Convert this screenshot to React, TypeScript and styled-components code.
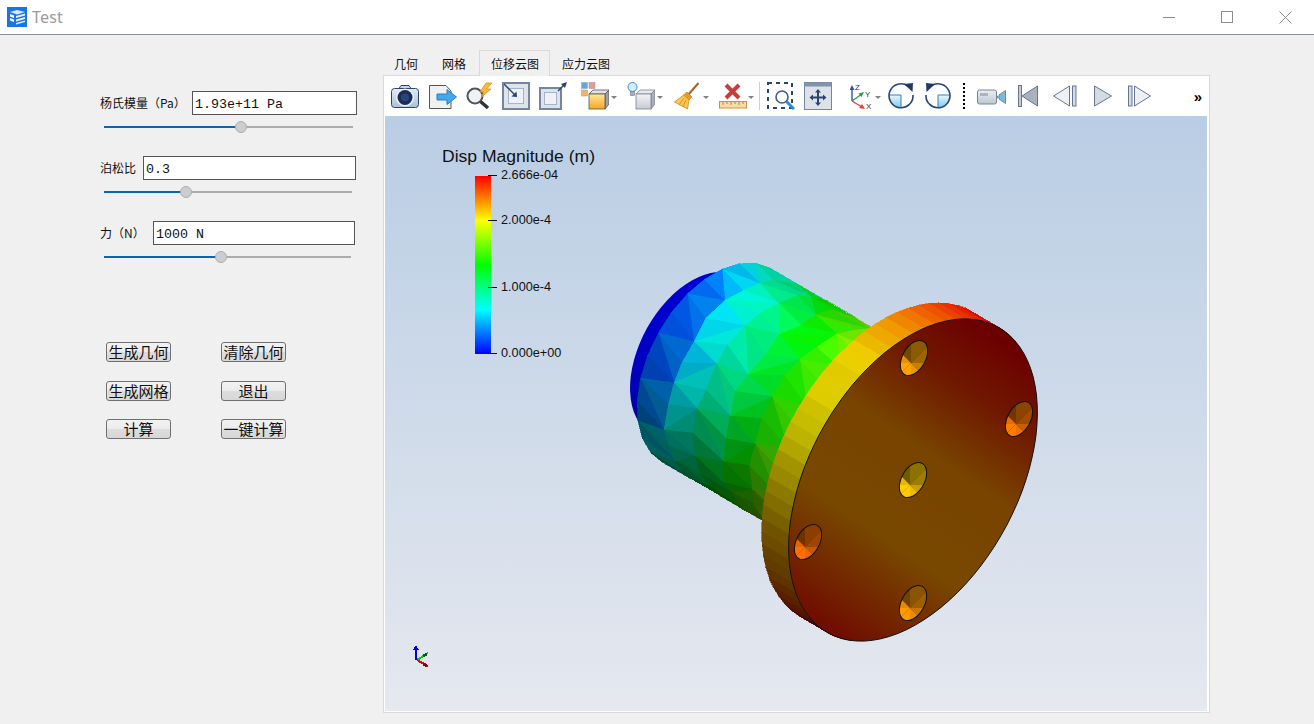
import React from "react";
import styled, { createGlobalStyle } from "styled-components";

const GlobalStyle = createGlobalStyle`
  html, body {
    margin: 0;
    padding: 0;
    background: #f0f0f0;
  }
  #root {
    width: 1314px;
    height: 724px;
    overflow: hidden;
  }
`;

const CJK = `"Noto Sans CJK SC", "Noto Sans", sans-serif`;

// Window chrome
const Window = styled.div`
  display: flex;
  flex-direction: column;
  width: 1314px;
  height: 724px;
  background: #f0f0f0;
  font-family: ${CJK};
`;

const TitleBar = styled.header`
  display: flex;
  align-items: center;
  height: 34px;
  padding-left: 7px;
  background: #fff;
  border-bottom: 1px solid #8a9096;
`;

const TitleText = styled.span`
  margin-left: 5px;
  font-family: "Noto Sans", sans-serif;
  font-size: 16px;
  letter-spacing: 0.2px;
  color: #9a9a9a;
`;

const WindowButtons = styled.div`
  display: flex;
  margin-left: auto;
`;

const WindowButton = styled.div`
  display: flex;
  align-items: center;
  justify-content: center;
  width: 58px;
  height: 30px;
`;

const Body = styled.main`
  display: flex;
  flex: 1;
  min-height: 0;
`;

// Left form column
const FormColumn = styled.section`
  display: flex;
  flex-direction: column;
  width: 383px;
  box-sizing: border-box;
  padding: 56px 0 0 100px;
`;

const Fields = styled.div`
  display: flex;
  flex-direction: column;
  gap: 22px;
`;

const Field = styled.div<{ $width: number }>`
  display: flex;
  flex-direction: column;
  width: ${(p) => p.$width}px;
`;

const FieldRow = styled.div`
  display: flex;
  align-items: center;
  height: 24px;
`;

const FieldLabel = styled.label<{ $width: number }>`
  flex: none;
  width: ${(p) => p.$width}px;
  margin-top: -2px;
  font-size: 12px;
  color: #111;
  white-space: nowrap;
`;

const FieldInput = styled.input`
  flex: 1;
  min-width: 0;
  height: 24px;
  box-sizing: border-box;
  margin: 0;
  padding: 2px 3px 0 2px;
  border: 1px solid #555;
  border-radius: 0;
  outline: none;
  background: #fff;
  font-family: "Liberation Mono", monospace;
  font-size: 13.33px;
  color: #111;
`;

const SliderTrack = styled.div<{ $width: number }>`
  position: relative;
  display: flex;
  align-items: center;
  width: ${(p) => p.$width}px;
  height: 14px;
  margin: 5px 0 0 4px;
`;

const SliderFill = styled.div`
  height: 2px;
  background: #0b63b5;
`;

const SliderRest = styled.div`
  flex: 1;
  height: 2px;
  background: #acacac;
`;

const SliderThumb = styled.div`
  position: absolute;
  top: 1px;
  width: 12px;
  height: 12px;
  margin-left: -6px;
  border-radius: 50%;
  box-sizing: border-box;
  border: 1px solid #adadad;
  background: #cdcdcd;
`;

const ButtonGrid = styled.div`
  display: grid;
  grid-template-columns: 65px 65px;
  grid-template-rows: 39px 38px 20px;
  column-gap: 50px;
  margin: 78px 0 0 6px;
`;

const PushButton = styled.button`
  width: 65px;
  height: 20px;
  box-sizing: border-box;
  margin: 0;
  padding: 0 0 2px;
  border: 1px solid #707070;
  border-radius: 3px;
  background: linear-gradient(#f2f2f2 0%, #ebebeb 50%, #dcdcdc 51%, #d8d8d8 100%);
  font-family: ${CJK};
  font-size: 15px;
  line-height: 17px;
  color: #111;
  white-space: nowrap;
  overflow: hidden;
`;

// Right tabbed view
const ViewColumn = styled.section`
  display: flex;
  flex-direction: column;
  width: 827px;
  height: 678px;
  box-sizing: border-box;
  padding-top: 15px;
`;

const TabBar = styled.nav`
  display: flex;
  align-items: flex-end;
  flex: none;
  height: 25px;
  font-size: 12px;
  color: #111;
`;

const Tab = styled.div<{ $active?: boolean }>`
  display: flex;
  align-items: center;
  box-sizing: border-box;
  height: ${(p) => (p.$active ? "26px" : "24px")};
  margin: ${(p) => (p.$active ? "0 1px -1px 0" : "0 2px 0 0")};
  padding: ${(p) => (p.$active ? "0 10px 0 11px" : "0 11px")};
  border: ${(p) => (p.$active ? "1px solid #d9d9d9" : "0")};
  border-bottom: 0;
  background: #f0f0f0;
  z-index: 1;
`;

const TabPanel = styled.div`
  display: flex;
  flex-direction: column;
  flex: 1;
  min-height: 0;
  box-sizing: border-box;
  padding: 0 2px 1px 1px;
  border: 1px solid #d9d9d9;
  background: #fff;
`;

const Toolbar = styled.div`
  display: flex;
  align-items: center;
  flex: none;
  height: 40px;
  padding: 0 5px 0 6px;
  background: #fff;
`;

const Tool = styled.div<{ $gap: number }>`
  display: flex;
  align-items: center;
  flex: none;
  height: 28px;
  margin-left: ${(p) => p.$gap}px;
`;

const MenuArrow = styled.span<{ $gap: number }>`
  width: 0;
  height: 0;
  margin: 2px 0 0 ${(p) => p.$gap}px;
  border-left: 3px solid transparent;
  border-right: 3px solid transparent;
  border-top: 3px solid #808080;
`;

const Separator = styled.div`
  width: 1px;
  height: 28px;
  background: #cfcfcf;
`;

const DottedHandle = styled.div`
  width: 0;
  height: 26px;
  border-left: 2px dotted #000;
  margin: 0 1px 0 0;
`;

const Overflow = styled.span`
  margin-left: auto;
  font-family: "Liberation Sans", sans-serif;
  font-size: 15px;
  font-weight: 700;
  color: #000;
`;

const Viewport = styled.div`
  flex: 1;
  min-height: 0;
  background: linear-gradient(#b9cde4, #e5e8ef);
`;

const Scene = styled.svg`
  display: block;
  width: 100%;
  height: 100%;
`;

// helpers for the rendered model
const rng = (seed: number) => () => {
  seed = (seed * 16807) % 2147483647;
  return seed / 2147483647;
};

const jet = (v: number): number[] => {
  const t = Math.max(0, Math.min(1, v)) * 4;
  if (t < 1) return [0, t, 1];
  if (t < 2) return [0, 1, 2 - t];
  if (t < 3) return [t - 2, 1, 0];
  return [1, 4 - t, 0];
};

const color = (v: number, shade: number) => {
  const [r, g, b] = jet(v);
  const s = Math.max(0, Math.min(1, shade)) * 255;
  return `rgb(${Math.round(r * s)},${Math.round(g * s)},${Math.round(b * s)})`;
};

const lerpTable = (table: number[][], x: number) => {
  if (x <= table[0][0]) return table[0][1];
  for (let i = 1; i < table.length; i++) {
    if (x <= table[i][0]) {
      const [x0, y0] = table[i - 1];
      const [x1, y1] = table[i];
      return y0 + ((x - x0) / (x1 - x0)) * (y1 - y0);
    }
  }
  return table[table.length - 1][1];
};

const rad = (61 * Math.PI) / 180;
const M = [Math.cos(rad), -Math.sin(rad)];
const N = [Math.sin(rad), Math.cos(rad)];

type Pt = number[];
const ringPoint = (c: Pt, a: number, b: number, deg: number): Pt => {
  const r = (deg * Math.PI) / 180;
  return [
    c[0] + a * Math.cos(r) * M[0] - b * Math.sin(r) * N[0],
    c[1] + a * Math.cos(r) * M[1] - b * Math.sin(r) * N[1],
  ];
};
const pts = (list: Pt[]) => list.map((p) => `${p[0].toFixed(1)},${p[1].toFixed(1)}`).join(" ");

const bodyShade = [[0, 0.78], [45, 0.98], [75, 0.9], [104, 0.72], [133, 0.48], [142, 0.4], [180, 0.3]];
const bodyValue = [[720, 0.02], [744, 0.07], [767, 0.14], [790, 0.25], [830, 0.36], [870, 0.5], [912, 0.62], [940, 0.68]];
const rimShade = [[0, 0.85], [35, 0.95], [62, 0.92], [80, 0.86], [95, 0.74], [115, 0.56], [134, 0.42], [180, 0.3]];
const rimValue = [[0, 1], [35, 0.88], [62, 0.78], [95, 0.76], [120, 0.79], [150, 0.86], [180, 1]];

const buildBody = () => {
  const rand = rng(4711);
  const back = [716, 365];
  const front = [886, 464];
  const nu = 6;
  const nv = 14;
  const grid: { p: Pt; deg: number }[][] = [];
  for (let i = 0; i <= nu; i++) {
    const row = [];
    for (let j = 0; j <= nv; j++) {
      const u = i / nu;
      const deg = (j / nv) * 180;
      const c = [back[0] + (front[0] - back[0]) * u, back[1] + (front[1] - back[1]) * u];
      const p = ringPoint(c, 111, 66, deg + (i % 2 ? 180 / nv / 2 : 0) * (j < nv && j > 0 ? 1 : 0));
      if (i > 0 && i < nu && j > 0 && j < nv) {
        p[0] += (rand() - 0.5) * 6;
        p[1] += (rand() - 0.5) * 6;
      }
      row.push({ p, deg });
    }
    grid.push(row);
  }
  const tris: { points: string; fill: string }[] = [];
  const add = (a: { p: Pt; deg: number }, b: { p: Pt; deg: number }, c: { p: Pt; deg: number }) => {
    const cx = (a.p[0] + b.p[0] + c.p[0]) / 3;
    const cy = (a.p[1] + b.p[1] + c.p[1]) / 3;
    const deg = (a.deg + b.deg + c.deg) / 3;
    const d = cx * N[0] + cy * N[1];
    const v = lerpTable(bodyValue, d) + (rand() - 0.5) * 0.01;
    const s = lerpTable(bodyShade, deg) + (rand() - 0.5) * 0.035;
    tris.push({ points: pts([a.p, b.p, c.p]), fill: color(v, s) });
  };
  for (let i = 0; i < nu; i++) {
    for (let j = 0; j < nv; j++) {
      const a = grid[i][j];
      const b = grid[i + 1][j];
      const c = grid[i + 1][j + 1];
      const d = grid[i][j + 1];
      if ((i + j) % 2) {
        add(a, b, c);
        add(a, c, d);
      } else {
        add(a, b, d);
        add(b, c, d);
      }
    }
  }
  return tris;
};

const faceCenter = [913, 480];
const rimCenter = [886, 464];

const buildRim = () => {
  const rand = rng(991);
  const quads: { points: string; fill: string }[] = [];
  for (let deg = -12; deg < 192; deg += 5) {
    const a = ringPoint(rimCenter, 175, 104, deg);
    const b = ringPoint(faceCenter, 175, 104, deg);
    const c = ringPoint(faceCenter, 175, 104, deg + 5.5);
    const d = ringPoint(rimCenter, 175, 104, deg + 5.5);
    const k = Math.max(0, Math.min(180, deg + 2.5));
    quads.push({
      points: pts([a, b, c, d]),
      fill: color(lerpTable(rimValue, k), lerpTable(rimShade, k) + (rand() - 0.5) * 0.025),
    });
  }
  return quads;
};

const holes = [
  { c: [914, 358], v: 0.84 },
  { c: [1019, 419], v: 0.88 },
  { c: [913, 480], v: 0.8 },
  { c: [808, 542], v: 0.89 },
  { c: [913, 603], v: 0.85 },
];

const bodyTris = buildBody();
const rimQuads = buildRim();
const faceOutline = pts(Array.from({ length: 90 }, (_, i) => ringPoint(faceCenter, 175, 104, i * 4)));

const Hole = ({ c, v, id }: { c: number[]; v: number; id: string }) => {
  const apex = [c[0] - 3, c[1] + 5];
  const fan = [0.44, 0.55, 0.62, 0.78, 0.92, 1, 1, 0.9];
  return (
    <g>
      <clipPath id={id}>
        <ellipse cx={c[0]} cy={c[1]} rx={19} ry={11.5} transform={`rotate(-61 ${c[0]} ${c[1]})`} />
      </clipPath>
      <g clipPath={`url(#${id})`}>
        {fan.map((s, i) => {
          const a0 = ((-135 + i * 45) * Math.PI) / 180;
          const a1 = ((-135 + (i + 1) * 45) * Math.PI) / 180;
          return (
            <polygon
              key={i}
              points={pts([apex, [apex[0] + 40 * Math.cos(a0), apex[1] + 40 * Math.sin(a0)], [apex[0] + 40 * Math.cos(a1), apex[1] + 40 * Math.sin(a1)]])}
              fill={color(v, s)}
            />
          );
        })}
      </g>
      <ellipse cx={c[0]} cy={c[1]} rx={19} ry={11.5} transform={`rotate(-61 ${c[0]} ${c[1]})`} fill="none" stroke="#111" strokeWidth={1} />
    </g>
  );
};

const ColorBar = () => (
  <g fontFamily="'Liberation Sans', sans-serif" fill="#111">
    <text x={442} y={162} fontSize={16} textLength={153} lengthAdjust="spacingAndGlyphs">
      Disp Magnitude (m)
    </text>
    <rect x={475} y={176} width={16} height={178} fill="url(#jetBar)" />
    {[175.5, 220.5, 287.5, 353.5].map((y) => (
      <line key={y} x1={488} x2={497} y1={y} y2={y} stroke="#111" strokeWidth={1} />
    ))}
    <text x={501} y={179} fontSize={12.7}>2.666e-04</text>
    <text x={501} y={224} fontSize={12.7}>2.000e-4</text>
    <text x={501} y={291} fontSize={12.7}>1.000e-4</text>
    <text x={501} y={357} fontSize={12.7}>0.000e+00</text>
  </g>
);

const Triad = () => (
  <g shapeRendering="crispEdges">
    <line x1={416} y1={660} x2={416} y2={648} stroke="#0000e0" strokeWidth={2} />
    <polygon points="413,650 419,650 416,645" fill="#0000e0" />
    <line x1={417} y1={660} x2={428} y2={653} stroke="#00d000" strokeWidth={2} />
    <line x1={423} y1={656} x2={427} y2={654} stroke="#006000" strokeWidth={3} />
    <line x1={417} y1={660} x2={428} y2={666} stroke="#e00000" strokeWidth={2} />
    <line x1={423} y1={664} x2={427} y2={666} stroke="#900000" strokeWidth={3} />
  </g>
);

const Model = () => (
  <Scene viewBox="385 116 822 595" aria-hidden>
    <defs>
      <linearGradient id="jetBar" x1="0" y1="0" x2="0" y2="1">
        <stop offset="0" stopColor="#ff0000" />
        <stop offset="0.25" stopColor="#ffff00" />
        <stop offset="0.5" stopColor="#00ff00" />
        <stop offset="0.75" stopColor="#00ffff" />
        <stop offset="1" stopColor="#0000ff" />
      </linearGradient>
      <linearGradient id="capShade" gradientUnits="userSpaceOnUse" x1="720" y1="280" x2="630" y2="420">
        <stop offset="0" stopColor="#0000d8" />
        <stop offset="0.55" stopColor="#0000b0" />
        <stop offset="1" stopColor="#00006c" />
      </linearGradient>
      <linearGradient id="faceShade" gradientUnits="userSpaceOnUse" x1="1010" y1="345" x2="820" y2="625">
        <stop offset="0" stopColor="#6c0000" />
        <stop offset="0.18" stopColor="#701800" />
        <stop offset="0.4" stopColor="#784400" />
        <stop offset="0.68" stopColor="#784800" />
        <stop offset="0.85" stopColor="#742800" />
        <stop offset="1" stopColor="#700c00" />
      </linearGradient>
    </defs>
    <ColorBar />
    <ellipse cx={695} cy={355} rx={90} ry={55} transform="rotate(-61 695 355)" fill="url(#capShade)" />
    <g shapeRendering="crispEdges">
      {bodyTris.map((t, i) => (
        <polygon key={i} points={t.points} fill={t.fill} stroke={t.fill} strokeWidth={0.6} />
      ))}
      {rimQuads.map((q, i) => (
        <polygon key={i} points={q.points} fill={q.fill} stroke={q.fill} strokeWidth={0.6} />
      ))}
    </g>
    <polygon points={faceOutline} fill="url(#faceShade)" stroke="#111" strokeWidth={1} />
    {holes.map((h, i) => (
      <Hole key={i} id={`hole${i}`} c={h.c} v={h.v} />
    ))}
    <Triad />
  </Scene>
);

// Toolbar icons, drawn on a 28 high box
const Icon = ({ w = 28, children }: { w?: number; children: React.ReactNode }) => (
  <svg width={w} height={28} viewBox={`0 0 ${w} 28`} aria-hidden>
    {children}
  </svg>
);

const navy = "#2a4474";
const slate = "#74869f";

const CameraIcon = () => (
  <Icon>
    <defs>
      <linearGradient id="camBody" x1="0" y1="0" x2="0" y2="1">
        <stop offset="0" stopColor="#e2ebf5" />
        <stop offset="1" stopColor="#a8c0dc" />
      </linearGradient>
    </defs>
    <path d="M8 6.5 L10 3.5 H18 L20 6.5" fill="#c5d5e8" stroke={navy} />
    <rect x={0.5} y={6.5} width={27} height={19} rx={3} fill="url(#camBody)" stroke={navy} />
    <circle cx={14} cy={15.5} r={9} fill="#eef4fa" />
    <circle cx={14} cy={15.5} r={7.5} fill="#1c2c56" />
    <circle cx={14} cy={15.5} r={4} fill="#27457c" />
  </Icon>
);

const ExportIcon = () => (
  <Icon>
    <path d="M0.5 3.5 H17 L22 9 V26.5 H0.5 Z" fill="#f1f1f1" stroke="#555" />
    <path d="M8 12 H18 V7.5 L27.5 15 L18 22.5 V18 H8 Z" fill="#45a8ea" stroke="#2b7fc0" />
  </Icon>
);

const LightningLensIcon = () => (
  <Icon>
    <circle cx={10} cy={14} r={7.5} fill="#eef2f6" stroke="#555" strokeWidth={2} />
    <line x1={15.5} y1={19.5} x2={23} y2={26} stroke="#333" strokeWidth={3.5} />
    <path d="M21 1 L15 10 H19 L16.5 15 L26 7 H21.5 L27 1 Z" fill="#f7bb3a" stroke="#e08c1d" strokeWidth={0.8} />
  </Icon>
);

const FitIcon = () => (
  <Icon>
    <rect x={1} y={1} width={26} height={26} fill="#dde3ea" stroke={slate} strokeWidth={2} />
    <rect x={6.5} y={6.5} width={15} height={15} fill="#eef1f5" stroke="#a6b3c4" />
    <line x1={2} y1={2} x2={13} y2={13} stroke={navy} strokeWidth={1.4} />
    <path d="M15 15 L14.5 9.5 L9.5 14.5 Z" fill={navy} />
  </Icon>
);

const OutwardIcon = () => (
  <Icon>
    <rect x={1} y={6} width={21} height={21} fill="#dde3ea" stroke={slate} strokeWidth={2} />
    <rect x={5.5} y={10.5} width={12} height={12} fill="#eef1f5" stroke="#a6b3c4" />
    <line x1={19} y1={9} x2={25} y2={3} stroke={navy} strokeWidth={1.4} />
    <path d="M28 0 L22 2 L26 6 Z" fill={navy} />
  </Icon>
);

const CubesIcon = () => (
  <Icon>
    <rect x={0.5} y={0.5} width={6} height={6} fill="#5aa9e2" stroke="#8aa" strokeWidth={0.5} />
    <rect x={8} y={0.5} width={6} height={6} fill="#e59a9a" stroke="#a88" strokeWidth={0.5} />
    <rect x={0.5} y={8} width={6} height={6} fill="#f0b468" stroke="#a98" strokeWidth={0.5} />
    <path d="M8 12 L12 8 H28 L24 12 Z" fill="#dfe3e8" stroke="#555" strokeWidth={0.8} />
    <path d="M24 12 L28 8 V22 L24 27 Z" fill="#9aa2ad" stroke="#555" strokeWidth={0.8} />
    <defs>
      <linearGradient id="cubeOrange" x1="0" y1="0" x2="0" y2="1">
        <stop offset="0" stopColor="#ffe79a" />
        <stop offset="1" stopColor="#f6a623" />
      </linearGradient>
    </defs>
    <rect x={8} y={12} width={16} height={15} fill="url(#cubeOrange)" stroke="#555" strokeWidth={0.8} />
  </Icon>
);

const BulbCubeIcon = () => (
  <Icon>
    <path d="M9 12 L13 8 H28 L24 12 Z" fill="#e6e9ed" stroke="#7a828c" strokeWidth={0.8} />
    <path d="M24 12 L28 8 V22 L24 27 Z" fill="#a9b0b9" stroke="#7a828c" strokeWidth={0.8} />
    <defs>
      <linearGradient id="cubeGrey" x1="0" y1="0" x2="0" y2="1">
        <stop offset="0" stopColor="#f2f3f5" />
        <stop offset="1" stopColor="#c6cbd1" />
      </linearGradient>
    </defs>
    <rect x={9} y={12} width={15} height={15} fill="url(#cubeGrey)" stroke="#7a828c" strokeWidth={0.8} />
    <circle cx={5.5} cy={5} r={4.5} fill="#d5ecfb" stroke="#3f8fcf" />
    <rect x={3.5} y={9.5} width={4} height={4} fill="#9fb0c2" stroke="#667" strokeWidth={0.5} />
  </Icon>
);

const BroomIcon = () => (
  <Icon>
    <line x1={24.5} y1={1} x2={14} y2={13} stroke="#a8652a" strokeWidth={2} />
    <path d="M13 10 L18 15 L15 18 L9.5 13 Z" fill="#e89a2c" stroke="#b5701d" strokeWidth={0.6} />
    <path d="M9.5 13 L15 18 L13.5 27 L0.5 20 Z" fill="#f9c64f" stroke="#d68a1d" strokeWidth={0.8} />
    <path d="M10 16 L5 23 M12 18 L9 25" stroke="#d68a1d" strokeWidth={0.8} />
  </Icon>
);

const RulerDeleteIcon = () => (
  <Icon>
    <path d="M7 3 L20 16 M20 3 L7 16" stroke="#c63d3a" strokeWidth={4} />
    <rect x={0.5} y={19.5} width={27} height={6.5} fill="#f6dca6" stroke="#cf9140" />
    <path d="M4 20 v3 M8 20 v2 M12 20 v3 M16 20 v2 M20 20 v3 M24 20 v2" stroke="#a8702a" strokeWidth={0.8} />
  </Icon>
);

const ZoomBoxIcon = () => (
  <Icon>
    <rect x={1} y={1} width={24} height={25} fill="none" stroke={navy} strokeWidth={2} strokeDasharray="4 4" />
    <circle cx={15} cy={15} r={6} fill="#fff" stroke="#3a5f8e" strokeWidth={1.6} />
    <line x1={19.5} y1={19.5} x2={27} y2={27} stroke="#2b8fd0" strokeWidth={3} />
  </Icon>
);

const FitAllIcon = () => (
  <Icon>
    <rect x={0.5} y={0.5} width={27} height={27} fill="#dde2e9" stroke={slate} />
    <rect x={0.5} y={0.5} width={27} height={4} fill="#8293ab" />
    <path
      d="M14 7 L17 10.5 H15 V14.5 H19 V12.5 L22.5 15.5 L19 18.5 V16.5 H15 V20.5 H17 L14 24 L11 20.5 H13 V16.5 H9 V18.5 L5.5 15.5 L9 12.5 V14.5 H13 V10.5 H11 Z"
      fill={navy}
    />
  </Icon>
);

const AxesIcon = () => (
  <Icon w={24}>
    <line x1={2} y1={19} x2={2} y2={6} stroke="#2c55b0" strokeWidth={1.4} />
    <path d="M-0.5 8 L2 3 L4.5 8 Z" fill="#2c55b0" />
    <line x1={2} y1={19} x2={12} y2={12} stroke="#2f9a4e" strokeWidth={1.4} />
    <path d="M14 10 L8.5 11.5 L11.5 15 Z" fill="#2f9a4e" />
    <line x1={2} y1={19} x2={12} y2={25} stroke="#e23c3c" strokeWidth={1.4} />
    <path d="M15 27 L9 26 L12 22 Z" fill="#e23c3c" />
    <g fontFamily="'Liberation Sans', sans-serif" fontSize={8} fill="#333">
      <text x={5} y={8}>Z</text>
      <text x={15} y={15}>Y</text>
      <text x={16} y={27}>X</text>
    </g>
  </Icon>
);

const RotateIcon = ({ flip, id }: { flip?: boolean; id: string }) => (
  <Icon w={26}>
    <defs>
      <linearGradient id={id} x1="0" y1="0" x2="0" y2="1">
        <stop offset="0" stopColor="#eaf6fd" />
        <stop offset="1" stopColor="#7fcdf0" />
      </linearGradient>
    </defs>
    <g transform={flip ? "translate(26 0) scale(-1 1)" : undefined}>
      <path d="M13 13 H1.5 A11.5 11.5 0 0 0 13 25 Z" fill={`url(#${id})`} />
      <path d="M1 13 H13 V25" fill="none" stroke="#3a7fb8" strokeWidth={1} />
      <path d="M20 4 A12 12 0 1 0 25 13" fill="none" stroke={navy} strokeWidth={1.6} />
      <path d="M16 2 L25 1 L24.5 10 Z" fill="#1f3a66" />
    </g>
  </Icon>
);

const VideoIcon = () => (
  <Icon w={29}>
    <defs>
      <linearGradient id="videoBody" x1="0" y1="0" x2="0" y2="1">
        <stop offset="0" stopColor="#eceff3" />
        <stop offset="1" stopColor="#bcc5d1" />
      </linearGradient>
    </defs>
    <rect x={0.5} y={8} width={19} height={14} rx={2} fill="url(#videoBody)" stroke={slate} />
    <rect x={3} y={11} width={8} height={3} fill="#a9b3bf" />
    <path d="M19.5 13 L22 15 L19.5 17 Z" fill={slate} />
    <path d="M22 13 L28.5 8.5 V21.5 L22 17 Z" fill="#7cb9dc" stroke={slate} />
  </Icon>
);

const triangleFill = "#d5dbe5";
const triangleStroke = "#66768f";

const FirstIcon = () => (
  <Icon w={20}>
    <rect x={0.5} y={3.5} width={3} height={21} fill="#c3cad5" stroke={triangleStroke} />
    <path d="M19.5 4 V24 L4 14 Z" fill="#a9b1bd" stroke={triangleStroke} />
  </Icon>
);

const PrevIcon = () => (
  <Icon w={24}>
    <path d="M16.5 4 V24 L0.5 14 Z" fill="#edf0f4" stroke={triangleStroke} />
    <rect x={19.5} y={4} width={3.5} height={20} fill={triangleFill} stroke={triangleStroke} />
  </Icon>
);

const PlayIcon = () => (
  <Icon w={18}>
    <path d="M0.5 4 V24 L17.5 14 Z" fill={triangleFill} stroke={triangleStroke} />
  </Icon>
);

const NextIcon = () => (
  <Icon w={23}>
    <rect x={0.5} y={4} width={3.5} height={20} fill={triangleFill} stroke={triangleStroke} />
    <path d="M6.5 4 V24 L22.5 14 Z" fill="#edf0f4" stroke={triangleStroke} />
  </Icon>
);

const tools: { gap: number; node: React.ReactNode; menu?: number }[] = [
  { gap: 0, node: <CameraIcon /> },
  { gap: 10, node: <ExportIcon /> },
  { gap: 8, node: <LightningLensIcon /> },
  { gap: 9, node: <FitIcon /> },
  { gap: 9, node: <OutwardIcon /> },
  { gap: 14, node: <CubesIcon />, menu: 2 },
  { gap: 10, node: <BulbCubeIcon />, menu: 2 },
  { gap: 11, node: <BroomIcon />, menu: 1 },
  { gap: 10, node: <RulerDeleteIcon />, menu: 1 },
  { gap: 5, node: <Separator /> },
  { gap: 7, node: <ZoomBoxIcon /> },
  { gap: 9, node: <FitAllIcon /> },
  { gap: 18, node: <AxesIcon />, menu: 1 },
  { gap: 7, node: <RotateIcon id="rotA" /> },
  { gap: 11, node: <RotateIcon id="rotB" flip /> },
  { gap: 12, node: <DottedHandle /> },
  { gap: 11, node: <VideoIcon /> },
  { gap: 12, node: <FirstIcon /> },
  { gap: 15, node: <PrevIcon /> },
  { gap: 17, node: <PlayIcon /> },
  { gap: 16, node: <NextIcon /> },
];

const fields = [
  { label: "杨氏模量（Pa）", value: "1.93e+11 Pa", labelWidth: 92, width: 257, track: 249, pct: 137 },
  { label: "泊松比", value: "0.3", labelWidth: 43, width: 256, track: 248, pct: 82 },
  { label: "力（N）", value: "1000 N", labelWidth: 53, width: 255, track: 247, pct: 117 },
];

const buttons = ["生成几何", "清除几何", "生成网格", "退出", "计算", "一键计算"];

const tabs = ["几何", "网格", "位移云图", "应力云图"];

export default function App() {
  return (
    <Window>
      <GlobalStyle />
      <TitleBar>
        <svg width={20} height={20} viewBox="0 0 20 20" aria-hidden>
          <rect width={20} height={20} fill="#1a73e8" />
          <path d="M3 5 L10 3 L18 5 L10 7.5 Z" fill="#dbe9fb" />
          <path d="M3 7 L7 8.5 V11 L3 9.5 Z M3 11 L7 12.5 V15 L3 13.5 Z" fill="#fff" />
          <path d="M9 9 L18 6.5 V8.5 L9 11 Z M9 12.5 L18 10 V12 L9 14.5 Z M9 16 L18 13.5 V15 L9 17.5 Z" fill="#e8f1fd" />
        </svg>
        <TitleText>Test</TitleText>
        <WindowButtons>
          <WindowButton>
            <svg width={12} height={12} viewBox="0 0 12 12" aria-hidden>
              <line x1={0} y1={6.5} x2={12} y2={6.5} stroke="#8c8c8c" />
            </svg>
          </WindowButton>
          <WindowButton>
            <svg width={12} height={12} viewBox="0 0 12 12" aria-hidden>
              <rect x={0.5} y={0.5} width={11} height={11} fill="none" stroke="#8c8c8c" />
            </svg>
          </WindowButton>
          <WindowButton>
            <svg width={13} height={13} viewBox="0 0 13 13" aria-hidden>
              <path d="M0.5 0.5 L12.5 12.5 M12.5 0.5 L0.5 12.5" stroke="#8c8c8c" />
            </svg>
          </WindowButton>
        </WindowButtons>
      </TitleBar>
      <Body>
        <FormColumn>
          <Fields>
            {fields.map((f) => (
              <Field key={f.label} $width={f.width}>
                <FieldRow>
                  <FieldLabel $width={f.labelWidth}>{f.label}</FieldLabel>
                  <FieldInput defaultValue={f.value} readOnly />
                </FieldRow>
                <SliderTrack $width={f.track}>
                  <SliderFill style={{ width: f.pct }} />
                  <SliderRest />
                  <SliderThumb style={{ left: f.pct }} />
                </SliderTrack>
              </Field>
            ))}
          </Fields>
          <ButtonGrid>
            {buttons.map((b) => (
              <PushButton key={b}>{b}</PushButton>
            ))}
          </ButtonGrid>
        </FormColumn>
        <ViewColumn>
          <TabBar>
            {tabs.map((t) => (
              <Tab key={t} $active={t === "位移云图"}>
                {t}
              </Tab>
            ))}
          </TabBar>
          <TabPanel>
            <Toolbar>
              {tools.map((t, i) => (
                <Tool key={i} $gap={t.gap}>
                  {t.node}
                  {t.menu !== undefined && <MenuArrow $gap={t.menu} />}
                </Tool>
              ))}
              <Overflow>»</Overflow>
            </Toolbar>
            <Viewport>
              <Model />
            </Viewport>
          </TabPanel>
        </ViewColumn>
      </Body>
    </Window>
  );
}
